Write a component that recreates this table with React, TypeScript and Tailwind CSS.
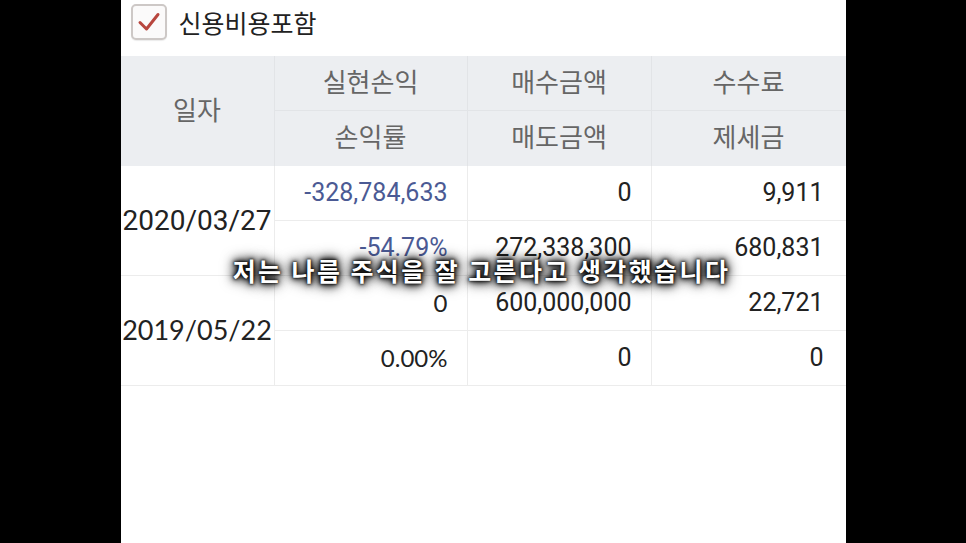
import React from "react";

const kr = "font-['Roboto','Noto_Sans_CJK_KR',sans-serif]";

type Row = { date: string; a1: string; a2: string; b1: string; b2: string; c1: string; c2: string; blue?: boolean; alt?: boolean };

const rows: Row[] = [
  { date: "2020/03/27", a1: "-328,784,633", a2: "-54.79%", b1: "0", b2: "272,338,300", c1: "9,911", c2: "680,831", blue: true },
  { date: "2019/05/22", a1: "0", a2: "0.00%", b1: "600,000,000", b2: "0", c1: "22,721", c2: "0", alt: true },
];

function Num({ children, className = "", last = false }: { children: React.ReactNode; className?: string; last?: boolean }) {
  return (
    <div className={`flex items-center justify-end ${last ? "pr-[22px]" : "pr-[19px] border-r border-[#ececec]"} ${className}`}>
      {children}
    </div>
  );
}

export default function App() {
  return (
    <div className={`w-[966px] h-[543px] bg-black flex justify-center overflow-hidden ${kr}`}>
      <div className="relative w-[725px] h-full bg-white">
        {/* checkbox row */}
        <div className="h-[56px] flex items-center pl-[10px] pb-[12px]">
          <div className="w-[36px] h-[36px] rounded-[5px] border-2 border-[#cdc8c6] bg-[#fbfafa] flex items-center justify-center shadow-[0_1px_1px_rgba(0,0,0,0.08)]">
            <svg width="24" height="22" viewBox="0 0 24 22">
              <path d="M3 11.5 L9.5 18 L21 3.5" fill="none" stroke="#b8463e" strokeWidth="3" strokeLinecap="round" strokeLinejoin="round" />
            </svg>
          </div>
          <span className="ml-[12px] text-[25px] text-[#222] leading-none font-['Noto_Sans_CJK_KR',sans-serif]">신용비용포함</span>
        </div>

        {/* table */}
        <div className="grid grid-cols-[154px_193px_184px_194px] text-[25px]">
          {/* header */}
          <div className="row-span-2 bg-[#eceef1] border-r border-[#e2e4e7] flex items-center justify-center text-[#666] text-[26px] h-[110px]">일자</div>
          <div className="h-[55px] bg-[#eceef1] border-r border-b border-[#e2e4e7] flex items-center justify-center text-[#666] text-[26px]">실현손익</div>
          <div className="h-[55px] bg-[#eceef1] border-r border-b border-[#e2e4e7] flex items-center justify-center text-[#666] text-[26px]">매수금액</div>
          <div className="h-[55px] bg-[#eceef1] border-b border-[#e2e4e7] flex items-center justify-center text-[#666] text-[26px]">수수료</div>
          <div className="h-[55px] bg-[#eceef1] border-r border-[#e2e4e7] flex items-center justify-center text-[#666] text-[26px]">손익률</div>
          <div className="h-[55px] bg-[#eceef1] border-r border-[#e2e4e7] flex items-center justify-center text-[#666] text-[26px]">매도금액</div>
          <div className="h-[55px] bg-[#eceef1] flex items-center justify-center text-[#666] text-[26px]">제세금</div>

          {rows.map((r) => (
            <React.Fragment key={r.date}>
              <div className={`row-span-2 border-r border-b border-[#ececec] flex items-center justify-center text-[#222] ${r.alt ? "font-['Lato',sans-serif] text-[27px]" : "text-[28px]"}`}>
                {r.date}
              </div>
              <Num className={`h-[55px] border-b ${r.blue ? "text-[#4b5a94]" : "text-[#222] font-['Lato',sans-serif] text-[24px]"}`}>{r.a1}</Num>
              <Num className="h-[55px] border-b text-[#222]">{r.b1}</Num>
              <Num last className="h-[55px] border-b border-[#ececec] text-[#222]">{r.c1}</Num>
              <Num className={`h-[55px] border-b ${r.blue ? "text-[#4b5a94]" : "text-[#222] font-['Lato',sans-serif] text-[24px]"}`}>{r.a2}</Num>
              <Num className="h-[55px] border-b text-[#222]">{r.b2}</Num>
              <Num last className="h-[55px] border-b border-[#ececec] text-[#222]">{r.c2}</Num>
            </React.Fragment>
          ))}
        </div>

        {/* subtitle overlay */}
        <div className="absolute left-0 right-0 top-[258px] flex justify-center pr-[3px]">
          <span className="text-[25px] font-bold tracking-[2.4px] text-white leading-none font-['Noto_Sans_CJK_KR',sans-serif] [text-shadow:0_0_2px_#000,0_0_4px_#000,0_0_7px_#000,0_0_11px_#000,0_0_15px_#000]">
            저는 나름 주식을 잘 고른다고 생각했습니다
          </span>
        </div>
      </div>
    </div>
  );
}
